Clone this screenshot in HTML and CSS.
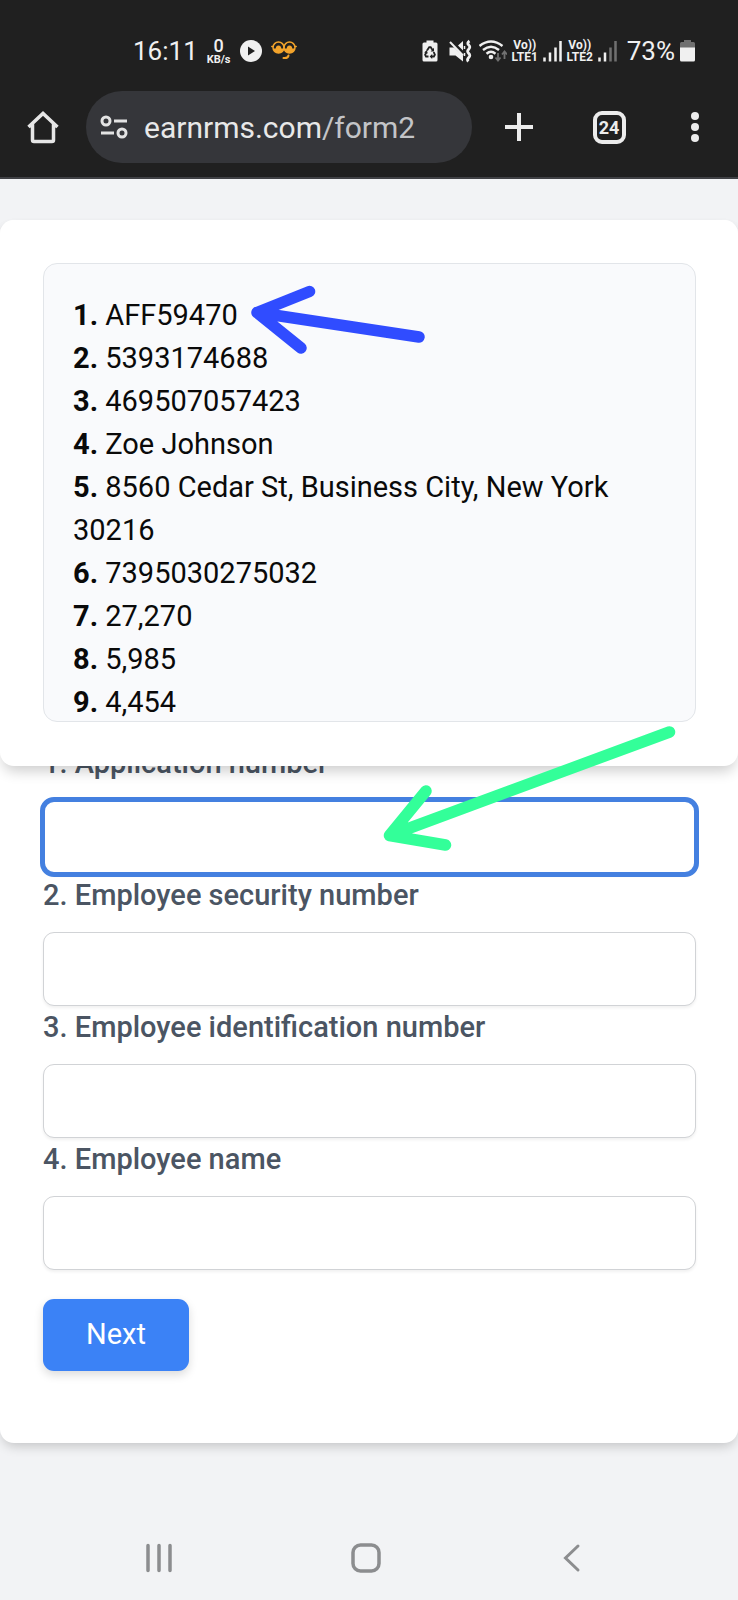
FILE: index.html
```html
<!DOCTYPE html>
<html lang="en">
<head>
<meta charset="utf-8">
<meta name="viewport" content="width=device-width, initial-scale=1">
<title>Form 2</title>
<link rel="stylesheet" href="styles.css">
</head>
<body>
<div class="screen">
  <header class="browser">
    <div class="status">
      <span class="status-text">16:11</span>
      <span class="speed"><span class="speed-value">0</span><span class="speed-unit">KB/s</span></span>
      <svg width="22" height="22" viewBox="0 0 22 22" aria-hidden="true"><circle cx="11" cy="11" r="11" fill="#f0f0f0"/><path d="M8 6.500v9l7-4.500z" fill="#202020"/></svg>
      <svg width="26" height="22" viewBox="0 0 26 22" aria-hidden="true"><g fill="none" stroke="#f2a32b" stroke-width="1.500" stroke-linecap="round"><circle cx="7.500" cy="7.500" r="5.500"/><circle cx="18.500" cy="7.500" r="5.500"/><path d="M.8 6.500h1.400M23.800 6.500h1.400"/><path d="M12.500 18q4.500.5 5-2.500" stroke-width="2"/></g><path d="M2.500 8.500h2.200q.3-3 2.800-3t2.800 3h2.200q-.8 4.500-5 4.500t-5-4.500zM13.500 8.500h2.200q.3-3 2.800-3t2.800 3h2.200q-.8 4.500-5 4.500t-5-4.500z" fill="#f2a32b"/></svg>
      <div class="status-right">
        <svg width="22" height="24" viewBox="0 0 22 24" aria-hidden="true"><path d="M4.500 1.500h7v2h2.500q1.500 0 1.500 1.500v16q0 1.500-1.500 1.500H2Q.5 22.500.5 21V5Q.5 3.500 2 3.500h2.500z" fill="#f0f0f0"/><g fill="none" stroke="#202020" stroke-width="1.800"><path d="M5 11.500l2.200-3.300h1.500l2 3M11.700 13l1.200 2.800-1 1.700H9.500M6.500 17.500h-2.500l-.9-1.700 1.200-2.300"/></g><path d="M12 8.800v3.700H8.700zM10.200 15v5l-2.600-2.500zM2.200 13.500l2.600-2.400 1 3.500z" fill="#202020"/></svg>
        <svg width="25" height="24" viewBox="0 0 25 24" aria-hidden="true"><path d="M.5 8.500H5L14 17v5.500L6.500 16.500h-6zM9 6.500L14 2v9.500z" fill="#f0f0f0"/><path d="M1 3l13 13.500" stroke="#f0f0f0" stroke-width="2"/><path d="M15.500 7v3M15.500 14v3" stroke="#f0f0f0" stroke-width="1.500"/><path d="M20.500 2q-3 2-.8 4t0 4.200t0 4.200t0 4.200t-.4 4" fill="none" stroke="#f0f0f0" stroke-width="2.800"/></svg>
        <svg width="28" height="24" viewBox="0 0 28 24" aria-hidden="true"><g fill="none" stroke="#f0f0f0" stroke-width="2.400"><path d="M.5 7q11.500-9 23 0M4 11q8-6.500 16 0M7.500 14.700q4.500-3.700 9 0"/></g><circle cx="12" cy="18" r="2.300" fill="#f0f0f0"/><path d="M19 14v7M16.500 18.500L19 21.500l2.500-3M25.500 20v-7M23 15.500l2.500-3 2.500 3" fill="none" stroke="#707070" stroke-width="1.800"/></svg>
        <span class="lte"><span>Vo))</span><span>LTE1</span></span>
        <svg width="19" height="24" viewBox="0 0 19 24" aria-hidden="true"><path d="M1.500 22.500v-4M7 22.500v-9M12.500 22.500V8.500M17.500 22.500V2" stroke="#f0f0f0" stroke-width="2.500"/></svg>
        <span class="lte"><span>Vo))</span><span>LTE2</span></span>
        <svg width="24" height="24" viewBox="0 0 24 24" aria-hidden="true"><path d="M1.500 22.500v-4M7 22.500v-9" stroke="#f0f0f0" stroke-width="2.500"/><path d="M12.500 22.500V8.500M17.500 22.500V2" stroke="#707070" stroke-width="2.500"/></svg>
        <span class="status-text">73%</span>
        <svg width="16" height="24" viewBox="0 0 16 24" aria-hidden="true"><path d="M4 1h7v2h2.500q1.500 0 1.500 1.500V9H0V4.500Q0 3 1.500 3H4z" fill="#707070"/><path d="M0 8.500h15V21q0 1.500-1.500 1.500h-12Q0 22.500 0 21z" fill="#f0f0f0"/></svg>
      </div>
    </div>
    <div class="toolbar">
      <button class="tool home" type="button" aria-label="Home"><svg width="34" height="34" viewBox="0 0 34 34"><path d="M2.500 17L17 3.500 31.500 17M6.500 14v16q0 1.500 1.500 1.500h18q1.500 0 1.500-1.500V14" fill="none" stroke="#e6e6e6" stroke-width="3.500"/></svg></button>
      <div class="address">
        <svg width="28" height="24" viewBox="0 0 28 24" aria-hidden="true"><g fill="none" stroke="#e3e3e3" stroke-width="3"><circle cx="6" cy="6" r="4"/><circle cx="22" cy="18" r="4"/><path d="M14 6h13M1 18h13"/></g></svg>
        <a class="url" href="#">earnrms.com<span class="url-path">/form2</span></a>
      </div>
      <button class="tool plus" type="button" aria-label="New tab"><svg width="30" height="30" viewBox="0 0 30 30"><path d="M15 1v28M1 15h28" stroke="#ececec" stroke-width="4"/></svg></button>
      <button class="tool" type="button" aria-label="Tabs"><span class="tab-count">24</span></button>
      <button class="tool" type="button" aria-label="Menu"><svg width="10" height="32" viewBox="0 0 10 32"><g fill="#ececec"><circle cx="5" cy="5" r="4"/><circle cx="5" cy="16" r="4"/><circle cx="5" cy="27" r="4"/></g></svg></button>
    </div>
  </header>

  <main class="page">
    <div class="card">
      <section class="reference">
        <div class="records">
          <div><b>1.</b> AFF59470</div>
          <div><b>2.</b> 5393174688</div>
          <div><b>3.</b> 469507057423</div>
          <div><b>4.</b> Zoe Johnson</div>
          <div><b>5.</b> 8560 Cedar St, Business City, New York 30216</div>
          <div><b>6.</b> 7395030275032</div>
          <div><b>7.</b> 27,270</div>
          <div><b>8.</b> 5,985</div>
          <div><b>9.</b> 4,454</div>
        </div>
      </section>
      <form class="form">
        <label for="application">1. Application number</label>
        <input class="active" id="application" type="text">
        <label for="security">2. Employee security number</label>
        <input id="security" type="text">
        <label for="identification">3. Employee identification number</label>
        <input id="identification" type="text">
        <label for="name">4. Employee name</label>
        <input id="name" type="text">
        <button class="next" type="button">Next</button>
      </form>
    </div>
  </main>

  <nav class="system">
    <button type="button" aria-label="Recent apps"><svg width="30" height="30" viewBox="0 0 30 30"><path d="M4 2.500v25M15 2.500v25M26 2.500v25" stroke="#8c8d8f" stroke-width="3.500" stroke-linecap="round"/></svg></button>
    <button type="button" aria-label="Home screen"><svg width="30" height="30" viewBox="0 0 30 30"><rect x="2" y="2" width="26" height="26" rx="7.500" fill="none" stroke="#8c8d8f" stroke-width="3.500"/></svg></button>
    <button type="button" aria-label="Back"><svg width="30" height="30" viewBox="0 0 30 30"><path d="M21 3L8.500 15 21 27" fill="none" stroke="#8c8d8f" stroke-width="3" stroke-linecap="round"/></svg></button>
  </nav>

  <svg class="arrows" width="738" height="1600" viewBox="0 0 738 1600" aria-hidden="true">
    <g fill="none" stroke-width="11.500" stroke-linecap="round" stroke-linejoin="round">
      <path stroke="#304cff" d="M309.500 291.500L257 312.500L301 348M257 312.500L419 337"/>
      <path stroke="#33ff99" d="M426 791L389.500 835.500L445.500 845M389.500 835.500L669.500 732"/>
    </g>
  </svg>
</div>
</body>
</html>
```

FILE: styles.css
```css
* {
  box-sizing: border-box;
}

body {
  margin: 0;
  background: #f2f3f5;
  color: #0a0a0a;
  font-family: Roboto, "Liberation Sans", sans-serif;
  font-size: 29px;
  line-height: 43px;
}

button,
input {
  margin: 0;
  border: 0;
  font: inherit;
}

svg {
  display: block;
  flex: none;
}

.screen {
  position: relative;
  display: flex;
  flex-direction: column;
  min-height: 100vh;
  overflow: hidden;
}

.browser {
  background: #202020;
  border-bottom: 2px solid #404145;
  color: #f0f0f0;
}

.status {
  display: flex;
  align-items: center;
  gap: 9px;
  padding: 35px 42px 13px 133px;
}

.status-right {
  display: flex;
  align-items: center;
  gap: 5px;
  margin-left: auto;
}

.status-text {
  font-size: 26px;
  line-height: 32px;
}

.speed,
.lte {
  display: flex;
  flex-direction: column;
  align-items: center;
}

.speed-value {
  font-size: 18px;
  font-weight: 500;
  line-height: 16px;
}

.speed-unit {
  font-size: 11px;
  font-weight: 700;
  line-height: 11px;
}

.lte {
  width: 26px;
  font-size: 12px;
  font-weight: 700;
  line-height: 12px;
}

.toolbar {
  display: flex;
  align-items: center;
  padding: 11px 0 14px;
}

.tool {
  display: flex;
  align-items: center;
  justify-content: center;
  width: 86px;
  height: 72px;
  padding: 0;
  background: none;
  color: #ececec;
}

.plus {
  width: 94px;
}

.address {
  display: flex;
  flex: 1;
  align-items: center;
  gap: 16px;
  height: 72px;
  padding: 0 14px;
  border-radius: 36px;
  background: #35363a;
}

.url {
  color: #e8e8e8;
  font-size: 30px;
  text-decoration: none;
}

.url-path {
  color: #c3c4c7;
}

.tab-count {
  width: 33px;
  height: 33px;
  border: 4px solid #ececec;
  border-radius: 9px;
  font-size: 18px;
  font-weight: 700;
  line-height: 25px;
}

.page {
  flex: 1;
  padding-top: 41px;
}

.card {
  border-radius: 14px;
  background: #fff;
  box-shadow: 0 6px 12px -3px rgba(0, 0, 0, 0.2);
}

.reference {
  position: relative;
  z-index: 1;
  padding: 43px 42px 44px 43px;
  border-radius: 14px;
  background: #fff;
  box-shadow: 0 8px 14px -3px rgba(0, 0, 0, 0.2);
}

.records {
  max-height: 459px;
  padding: 30px 29px 0;
  border: 1px solid #e2e5e9;
  border-radius: 14px;
  background: #f9fafc;
  overflow: hidden;
}

.form {
  display: flex;
  flex-direction: column;
  margin-top: -24px;
  padding: 0 42px 72px 43px;
}

.form label {
  margin-bottom: 15px;
  color: #4b5563;
  font-weight: 500;
}

.form input {
  height: 74px;
  padding: 0 20px;
  border: 1px solid #d1d3d6;
  border-radius: 11px;
  background: #fff;
  box-shadow: 0 2px 3px rgba(0, 0, 0, 0.06);
}

.form .active {
  outline: 5px solid #4480e0;
  outline-offset: -2px;
}

.next {
  align-self: flex-start;
  margin-top: 29px;
  padding: 14px 43px 15px;
  border-radius: 11px;
  background: #3b82f6;
  box-shadow: 0 4px 10px rgba(0, 0, 0, 0.14);
  color: #fff;
}

.system {
  display: flex;
  justify-content: space-between;
  padding: 0 151px 27px 144px;
}

.system button {
  padding: 0;
  background: none;
}

.arrows {
  position: absolute;
  top: 0;
  left: 0;
  z-index: 2;
  pointer-events: none;
}
```
